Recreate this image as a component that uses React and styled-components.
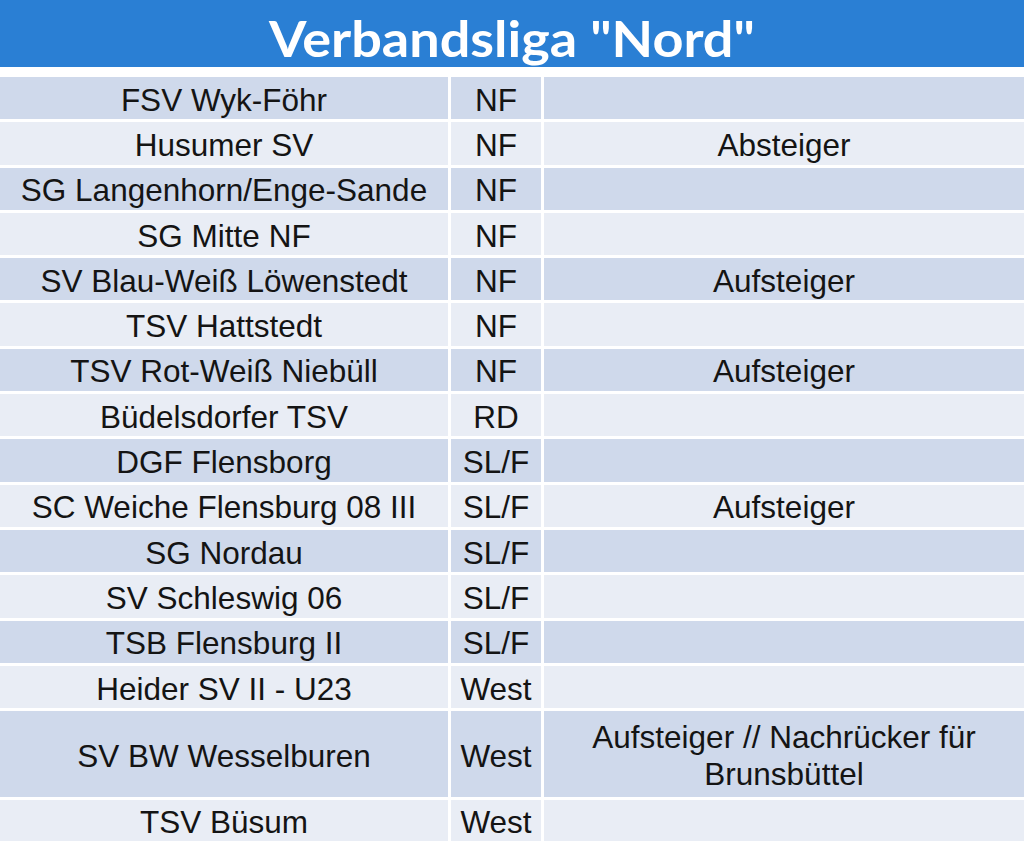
import React from 'react';
import styled, { createGlobalStyle } from 'styled-components';

const GlobalStyle = createGlobalStyle`
  html, body {
    margin: 0;
    padding: 0;
    background: #ffffff;
  }
`;

const Page = styled.div`
  width: 1024px;
  height: 851px;
  background: #ffffff;
  overflow: hidden;
`;

const Banner = styled.div`
  height: 67px;
  box-sizing: border-box;
  padding-top: 13px;
  display: flex;
  align-items: flex-start;
  justify-content: center;
  background: #2a7fd4;
`;

const Title = styled.h1`
  margin: 0;
  display: inline-block;
  color: #ffffff;
  font-family: Lato, 'Open Sans', sans-serif;
  font-weight: 700;
  font-size: 50px;
  line-height: 50px;
  transform: scaleX(1.08);
`;

const Table = styled.div`
  display: grid;
  grid-template-columns: 448px 90px 1fr;
  column-gap: 3px;
  row-gap: 3px;
  margin-top: 10px;
`;

const Cell = styled.div`
  display: flex;
  align-items: center;
  justify-content: center;
  text-align: center;
  box-sizing: border-box;
  padding-top: 4px;
  height: ${(p) => p.$h}px;
  background: ${(p) => (p.$dark ? '#cfd9eb' : '#e9edf5')};
  color: #141414;
  font-family: 'Liberation Sans', Arial, sans-serif;
  font-size: 31.5px;
  line-height: 37px;
`;

const rows = [
  ['FSV Wyk-Föhr', 'NF', ''],
  ['Husumer SV', 'NF', 'Absteiger'],
  ['SG Langenhorn/Enge-Sande', 'NF', ''],
  ['SG Mitte NF', 'NF', ''],
  ['SV Blau-Weiß Löwenstedt', 'NF', 'Aufsteiger'],
  ['TSV Hattstedt', 'NF', ''],
  ['TSV Rot-Weiß Niebüll', 'NF', 'Aufsteiger'],
  ['Büdelsdorfer TSV', 'RD', ''],
  ['DGF Flensborg', 'SL/F', ''],
  ['SC Weiche Flensburg 08 III', 'SL/F', 'Aufsteiger'],
  ['SG Nordau', 'SL/F', ''],
  ['SV Schleswig 06', 'SL/F', ''],
  ['TSB Flensburg II', 'SL/F', ''],
  ['Heider SV II - U23', 'West', ''],
  ['SV BW Wesselburen', 'West', 'Aufsteiger // Nachrücker für Brunsbüttel', 86],
  ['TSV Büsum', 'West', '', 41],
];

export default function App() {
  return (
    <Page>
      <GlobalStyle />
      <Banner>
        <Title>Verbandsliga "Nord"</Title>
      </Banner>
      <Table>
        {rows.map(([club, area, note, h], i) => (
          <React.Fragment key={club}>
            <Cell $dark={i % 2 === 0} $h={h || 42.3}>{club}</Cell>
            <Cell $dark={i % 2 === 0} $h={h || 42.3}>{area}</Cell>
            <Cell $dark={i % 2 === 0} $h={h || 42.3}>{note}</Cell>
          </React.Fragment>
        ))}
      </Table>
    </Page>
  );
}
